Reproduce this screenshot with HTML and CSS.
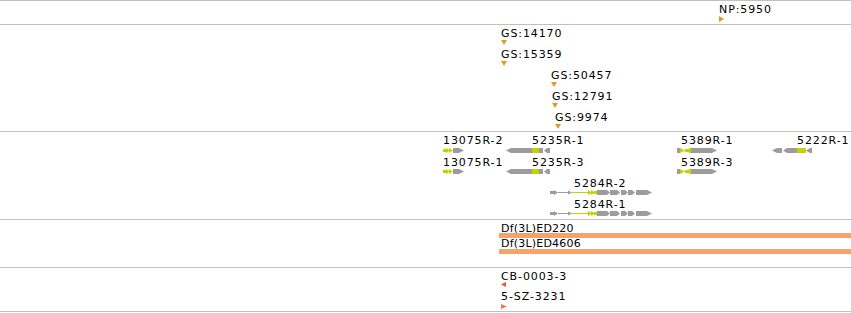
FILE: index.html
```html
<!DOCTYPE html>
<html lang="en">
<head>
  <meta charset="UTF-8">
  <title>Feature Tracks</title>
  <link rel="stylesheet" href="styles.css">
</head>
<body>
  <!-- shared gene glyphs -->
  <svg class="defs" width="0" height="0">
    <symbol id="g-13075" viewBox="0 0 21 5">
      <polygon class="cds" points="0,1 3,1 3,0 7,2.5 3,5 3,4 0,4"/>
      <polygon class="cds" points="6,0 10,2.5 6,5"/>
      <polygon class="utr" points="10,0 16,0 21,2.5 16,5 10,5"/>
    </symbol>
    <symbol id="g-5235" viewBox="0 0 44 5">
      <polygon class="utr" points="0,2.5 5,0 26,0 26,5 5,5"/>
      <rect class="cds" x="26" y="0" width="7" height="5"/>
      <rect class="utr" x="33" y="0" width="4" height="5"/>
      <polygon class="utr" points="38,2.5 41,0 44,0 44,5 41,5"/>
    </symbol>
    <symbol id="g-5389" viewBox="0 0 40 5">
      <rect class="utr" x="0" y="0" width="3" height="5"/>
      <polygon class="cds" points="3,0 8,2.5 3,5"/>
      <rect class="cds" x="8" y="1" width="4" height="3"/>
      <rect class="cds" x="12" y="0" width="2" height="5"/>
      <polygon class="utr" points="14,0 35,0 40,2.5 35,5 14,5"/>
    </symbol>
    <symbol id="g-5284" viewBox="0 0 102 5">
      <rect class="utr" x="0" y="1" width="4" height="3"/>
      <polygon class="utr" points="4,0 8,2.5 4,5"/>
      <rect class="utr" x="8" y="2" width="11" height="1"/>
      <polygon class="utr" points="18,0.5 22,2.5 18,4.5"/>
      <rect class="cds" x="22" y="2" width="16" height="1"/>
      <polygon class="cds" points="38,0 42,2.5 38,5"/>
      <polygon class="cds" points="41,0 45,2.5 41,5"/>
      <rect class="cds" x="44" y="1" width="3" height="3"/>
      <polygon class="utr" points="47,0 57,0 60,2.5 57,5 47,5"/>
      <polygon class="utr" points="60,0 67,0 70,2.5 67,5 60,5"/>
      <polygon class="utr" points="71,0 75,0 78,2.5 75,5 71,5"/>
      <polygon class="utr" points="78,0 82,0 85,2.5 82,5 78,5"/>
      <polygon class="utr" points="86,0 97,0 102,2.5 97,5 86,5"/>
    </symbol>
  </svg>

  <div class="browser">
    <div class="track track-np">
      <span class="label" style="left:719px;top:2px">NP:5950</span>
      <svg class="mark" style="left:719px;top:15px" width="5" height="6"><polygon class="gold" points="0,0 5,3 0,6"/></svg>
    </div>

    <div class="track track-gs">
      <span class="label" style="left:501px;top:2px">GS:14170</span>
      <svg class="mark" style="left:501px;top:15px" width="6" height="5"><polygon class="gold" points="0,0 6,0 3,5"/></svg>
      <span class="label" style="left:501px;top:23px">GS:15359</span>
      <svg class="mark" style="left:501px;top:36px" width="6" height="5"><polygon class="gold" points="0,0 6,0 3,5"/></svg>
      <span class="label" style="left:551px;top:44px">GS:50457</span>
      <svg class="mark" style="left:551px;top:57px" width="6" height="5"><polygon class="gold" points="0,0 6,0 3,5"/></svg>
      <span class="label" style="left:552px;top:65px">GS:12791</span>
      <svg class="mark" style="left:552px;top:78px" width="6" height="5"><polygon class="gold" points="0,0 6,0 3,5"/></svg>
      <span class="label" style="left:555px;top:86px">GS:9974</span>
      <svg class="mark" style="left:555px;top:99px" width="6" height="5"><polygon class="gold" points="0,0 6,0 3,5"/></svg>
    </div>

    <div class="track track-genes">
      <span class="label" style="left:443px;top:2px">13075R-2</span>
      <svg class="mark" style="left:443px;top:16px" width="21" height="5"><use href="#g-13075"/></svg>
      <span class="label" style="left:532px;top:2px">5235R-1</span>
      <svg class="mark" style="left:506px;top:16px" width="44" height="5"><use href="#g-5235"/></svg>
      <span class="label" style="left:681px;top:2px">5389R-1</span>
      <svg class="mark" style="left:677px;top:16px" width="40" height="5"><use href="#g-5389"/></svg>
      <span class="label" style="left:797px;top:2px">5222R-1</span>
      <svg class="mark" style="left:772px;top:16px" width="40" height="5">
        <polygon class="utr" points="0,2.5 5,0 10,0 10,5 5,5"/>
        <polygon class="utr" points="11,2.5 15,0 25,0 25,5 15,5"/>
        <rect class="cds" x="25" y="0" width="9" height="5"/>
        <polygon class="utr" points="34,2.5 38,0 40,0 40,5 38,5"/>
      </svg>

      <span class="label" style="left:443px;top:24px">13075R-1</span>
      <svg class="mark" style="left:443px;top:37px" width="21" height="5"><use href="#g-13075"/></svg>
      <span class="label" style="left:532px;top:24px">5235R-3</span>
      <svg class="mark" style="left:506px;top:37px" width="44" height="5"><use href="#g-5235"/></svg>
      <span class="label" style="left:681px;top:24px">5389R-3</span>
      <svg class="mark" style="left:677px;top:37px" width="40" height="5"><use href="#g-5389"/></svg>

      <span class="label" style="left:574px;top:45px">5284R-2</span>
      <svg class="mark" style="left:550px;top:58px" width="102" height="5"><use href="#g-5284"/></svg>
      <span class="label" style="left:574px;top:66px">5284R-1</span>
      <svg class="mark" style="left:550px;top:79px" width="102" height="5"><use href="#g-5284"/></svg>
    </div>

    <div class="track track-df">
      <span class="label tight" style="left:501px;top:2px">Df(3L)ED220</span>
      <div class="bar" style="left:499px;top:13px"></div>
      <span class="label tight" style="left:501px;top:17px">Df(3L)ED4606</span>
      <div class="bar" style="left:499px;top:29px"></div>
    </div>

    <div class="track track-cb">
      <span class="label" style="left:501px;top:2px">CB-0003-3</span>
      <svg class="mark" style="left:501px;top:14px" width="5" height="5"><polygon class="red" points="5,0 0,2.5 5,5"/></svg>
      <span class="label" style="left:501px;top:22px">5-SZ-3231</span>
      <svg class="mark" style="left:501px;top:36px" width="6" height="5"><polygon class="salmon" points="0,0 6,2.5 0,5"/></svg>
    </div>
  </div>
</body>
</html>
```

FILE: styles.css
```css
body {
  margin: 0;
  background: #ffffff;
  color: #000000;
  font-family: "DejaVu Sans", sans-serif;
  font-size: 11px;
}

.defs {
  position: absolute;
  width: 0;
  height: 0;
}

.browser {
  width: 851px;
  border-top: 1px solid #c0c0c0;
}

.track {
  position: relative;
  overflow: hidden;
  border-bottom: 1px solid #c0c0c0;
}

.track-np { height: 23px; }
.track-gs { height: 106px; }
.track-genes { height: 87px; }
.track-df { height: 47px; }
.track-cb { height: 43px; }

/* features sit at their coordinate on the track */
.label {
  position: absolute;
  line-height: 13px;
  white-space: nowrap;
  letter-spacing: 0.9px;
}

.label.tight {
  letter-spacing: 0.2px;
}

.mark {
  position: absolute;
  display: block;
  overflow: visible;
}

.bar {
  position: absolute;
  right: 0;
  height: 5px;
  background: #f4a36c;
}

.gold { fill: #e29a22; }
.red { fill: #e8553a; }
.salmon { fill: #f27656; }
.utr { fill: #9c9c9c; }
.cds { fill: #c4d200; }
```
